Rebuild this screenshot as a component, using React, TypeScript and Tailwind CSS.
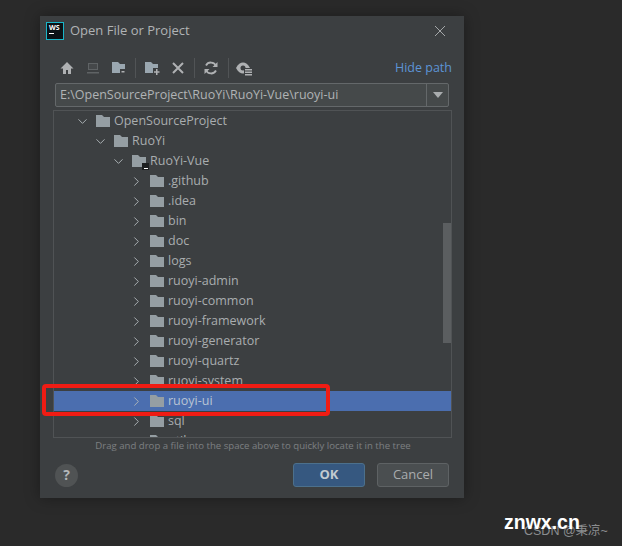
import { ChevronDown, ChevronRight } from "lucide-react";

type Row = { name: string; depth: number; open?: boolean; selected?: boolean; module?: boolean };

const rows: Row[] = [
  { name: "OpenSourceProject", depth: 0, open: true },
  { name: "RuoYi", depth: 1, open: true },
  { name: "RuoYi-Vue", depth: 2, open: true, module: true },
  { name: ".github", depth: 3 },
  { name: ".idea", depth: 3 },
  { name: "bin", depth: 3 },
  { name: "doc", depth: 3 },
  { name: "logs", depth: 3 },
  { name: "ruoyi-admin", depth: 3 },
  { name: "ruoyi-common", depth: 3 },
  { name: "ruoyi-framework", depth: 3 },
  { name: "ruoyi-generator", depth: 3 },
  { name: "ruoyi-quartz", depth: 3 },
  { name: "ruoyi-system", depth: 3 },
  { name: "ruoyi-ui", depth: 3, selected: true },
  { name: "sql", depth: 3 },
  { name: "utils", depth: 3 },
];

function Folder() {
  return (
    <svg width="16" height="14" viewBox="0 0 16 14" className="shrink-0">
      <path d="M1 1h6l2 2h6v10H1z" fill="#959ea3" />
    </svg>
  );
}

function TreeRow({ row }: { row: Row }) {
  return (
    <div className={`flex h-5 items-center ${row.selected ? "bg-[#4b6eaf] text-[#b9c4d4]" : ""}`}>
      <div className="flex h-5 items-center" style={{ marginLeft: 20 + row.depth * 18 }}>
        <span className="flex w-[17px] shrink-0 justify-center">
          {row.open ? (
            <ChevronDown size={15} strokeWidth={1.5} className="text-[#aeb4b8]" />
          ) : (
            <ChevronRight size={15} strokeWidth={1.5} className="text-[#aeb4b8]" />
          )}
        </span>
        <span className="relative ml-[4px] mr-[3px]">
          <Folder />
          {row.module && (
            <span className="absolute -right-[2px] bottom-[-2px] flex h-[7px] w-[7px] items-end justify-center bg-[#1d1f20] pb-px">
              <span className="h-px w-[4px] bg-white" />
            </span>
          )}
        </span>
        <span>{row.name}</span>
      </div>
    </div>
  );
}

function ToolIcons() {
  return (
    <div className="flex items-center">
      <svg width="16" height="16" viewBox="0 0 16 16">
        <path d="M8 2 1.5 8.5H4V14h3v-4h2v4h3V8.5h2.500z" fill="#afb1b3" />
      </svg>
      <svg width="16" height="16" viewBox="0 0 16 16" className="ml-[10px]">
        <path d="M3 3h10v7H3zM2 12h12v1.500H2z" fill="#5f6365" />
        <path d="M4 4h8v5H4z" fill="#45484a" />
      </svg>
      <svg width="16" height="16" viewBox="0 0 16 16" className="ml-[10px]">
        <path d="M1 2h6l2 2h5v9H1z" fill="#9aa7b0" />
        <path d="M9 9h6v5H9z" fill="#3c3f41" />
        <path d="M10.500 11h3v1.500h-3z" fill="#afb1b3" />
      </svg>
      <span className="ml-[8px] h-5 w-px bg-[#515456]" />
      <svg width="16" height="16" viewBox="0 0 16 16" className="ml-[8px]">
        <path d="M1 2h6l2 2h5v9H1z" fill="#9aa7b0" />
        <path d="M9 8h7v7H9z" fill="#3c3f41" />
        <path d="M12 9h1.500v2.200H15.500v1.500h-2V15H12v-2.300H10v-1.500h2z" fill="#afb1b3" />
      </svg>
      <svg width="16" height="16" viewBox="0 0 16 16" className="ml-[10px]">
        <path d="m3 3 10 10M13 3 3 13" stroke="#afb1b3" strokeWidth="2" fill="none" />
      </svg>
      <span className="ml-[8px] h-5 w-px bg-[#515456]" />
      <svg width="16" height="16" viewBox="0 0 16 16" className="ml-[8px]">
        <path d="M13 6a5.500 5.500 0 0 0-10-.5M3 10a5.500 5.500 0 0 0 10 .5" stroke="#afb1b3" strokeWidth="1.800" fill="none" />
        <path d="M14.500 2v5h-5zM1.500 14V9h5z" fill="#afb1b3" />
      </svg>
      <span className="ml-[9px] h-5 w-px bg-[#515456]" />
      <svg width="18" height="16" viewBox="0 0 18 16" className="ml-[6px]">
        <path d="M1 8c2-4 4.500-5.500 7-5.500S13 4 15 8c-2 4-4.500 5.500-7 5.500S3 12 1 8z" fill="#afb1b3" />
        <circle cx="8" cy="8" r="2.500" fill="#3c3f41" />
        <path d="M9 8h9v8H9z" fill="#3c3f41" />
        <path d="M10 9h7v1.500h-7zM10 11.500h7V13h-7zM10 14h7v1.500h-7z" fill="#afb1b3" />
      </svg>
    </div>
  );
}

export default function App() {
  return (
    <div className="relative h-[546px] w-[622px] overflow-hidden bg-[#2a2a2a] pl-10 pt-4 font-['Open_Sans','Noto_Sans',sans-serif] text-[12.5px] text-[#a9adaf]">
      <div className="h-[482px] w-[424px] bg-[#3c3f41] shadow-[0_0_14px_rgba(0,0,0,0.35)]">
        {/* title bar */}
        <div className="flex h-[29px] items-center pl-[7px] pr-[18px]">
          <div className="flex h-4 w-4 flex-col bg-[#0b1216] pl-[2px] pt-[1px] outline-1 outline-[#19b5c8]">
            <span className="text-[7px] font-bold leading-[8px] text-white">WS</span>
            <span className="mt-[1px] h-px w-[5px] bg-white" />
          </div>
          <span className="ml-[7px] text-[13px] text-[#b0b3b5]">Open File or Project</span>
          <svg width="12" height="12" viewBox="0 0 12 12" className="ml-auto">
            <path d="m1 1 10 10M11 1 1 11" stroke="#a4a7a9" strokeWidth="1" fill="none" />
          </svg>
        </div>

        {/* toolbar */}
        <div className="mt-[13px] flex h-5 items-center pl-[19px] pr-3">
          <ToolIcons />
          <span className="ml-auto text-[#5d94d6]">Hide path</span>
        </div>

        {/* path field */}
        <div className="ml-[15px] mt-[5px] flex h-[24px] w-[394px] items-center rounded-[2px] border border-[#64686a] bg-[#45494a]">
          <span className="flex-1 pl-1 text-[#b0b3b5]">E:\OpenSourceProject\RuoYi\RuoYi-Vue\ruoyi-ui</span>
          <span className="flex h-full w-[22px] items-center justify-center border-l border-[#64686a]">
            <span className="h-0 w-0 border-x-[5px] border-t-[6px] border-x-transparent border-t-[#a9acae]" />
          </span>
        </div>

        {/* tree */}
        <div className="relative ml-[13px] mt-[3px] h-[328px] w-[399px] overflow-hidden border border-[#505355] bg-[#3c3f41]">
          <div>
            {rows.map((r) => (
              <TreeRow key={r.name} row={r} />
            ))}
          </div>
          <div className="absolute right-0 top-[112px] h-[120px] w-2 bg-[#5b5e60]" />
        </div>

        <div className="mt-[1px] pl-[2px] text-center text-[9.6px] leading-[14px] text-[#7c7f81]">
          Drag and drop a file into the space above to quickly locate it in the tree
        </div>

        {/* footer */}
        <div className="mt-[10px] flex items-center pl-[15px] pr-[15px]">
          <div className="flex h-[23px] w-[23px] items-center justify-center rounded-full bg-[#505354] text-sm font-bold text-[#b4b7b9]">?</div>
          <button className="ml-auto h-6 w-[72px] rounded-[3px] border border-[#4c708c] bg-[#365880] text-[13px] font-bold text-[#c2cad0]">OK</button>
          <button className="ml-[12px] h-6 w-[72px] rounded-[3px] border border-[#5e6264] bg-[#4a4e50] text-[13px] text-[#a9acae]">Cancel</button>
        </div>
      </div>

      {/* red annotation */}
      <div className="absolute left-[42px] top-[384px] h-[32px] w-[288px] rounded-[4px] border-[4px] border-[#f01c14]" />

      {/* watermark */}
      <div className="absolute left-[524px] top-[523px] font-['Liberation_Sans','Noto_Sans_CJK_SC',sans-serif] text-[12.500px] leading-4 text-[#8a8d8f]">CSDN @秉凉~</div>
      <div className="absolute left-[504px] top-[510px] font-['Liberation_Sans',sans-serif] text-[19.500px] font-bold leading-6 text-white">znwx.cn</div>
    </div>
  );
}
